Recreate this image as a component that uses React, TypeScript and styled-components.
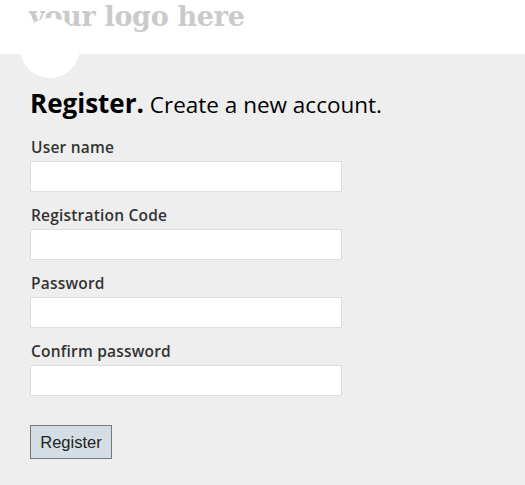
import React from 'react';
import styled, { createGlobalStyle } from 'styled-components';

const GlobalStyle = createGlobalStyle`
  html, body {
    margin: 0;
    padding: 0;
    background: #eeeeee;
  }
  body {
    font-family: "Open Sans", "Noto Sans", sans-serif;
  }
`;

const Header = styled.header`
  position: relative;
  height: 54px;
  background: #ffffff;
  padding-left: 29px;
`;

const Logo = styled.div`
  font-family: "DejaVu Serif", "Liberation Serif", serif;
  font-weight: bold;
  font-size: 27px;
  line-height: 34px;
  letter-spacing: -0.3px;
  color: #cacaca;
`;

const LogoBadge = styled.div`
  position: absolute;
  left: 20px;
  top: 18px;
  width: 60px;
  height: 60px;
  border-radius: 50%;
  background: #ffffff;
`;

const Main = styled.main`
  background: #eeeeee;
  padding: 33px 30px 24px 30px;
`;

const Title = styled.h1`
  margin: 0 0 15px 0;
  font-size: 22.5px;
  font-weight: normal;
  line-height: 32px;
  color: #000000;
`;

const Strong = styled.strong`
  font-size: 26px;
  font-weight: 700;
`;

const Field = styled.div`
  display: flex;
  flex-direction: column;
  margin-bottom: 12px;
`;

const Label = styled.label`
  font-size: 15.5px;
  font-weight: 600;
  letter-spacing: 0.2px;
  line-height: 22px;
  color: #333333;
  margin: 0 0 3px 1px;
`;

const Input = styled.input`
  box-sizing: border-box;
  width: 312px;
  height: 31px;
  border: 1px solid #dddddd;
  background: #ffffff;
  outline: none;
  padding: 4px 6px;
`;

const Button = styled.button`
  margin-top: 17px;
  box-sizing: border-box;
  width: 82px;
  height: 34px;
  background: #d4dde3;
  border: 1px solid #777777;
  color: #222222;
  font-family: "Liberation Sans", Arial, sans-serif;
  font-size: 16.5px;
  padding: 0;
`;

const fields = ['User name', 'Registration Code', 'Password', 'Confirm password'];

export default function App() {
  return (
    <>
      <GlobalStyle />
      <Header>
        <LogoBadge />
        <Logo>your logo here</Logo>
      </Header>
      <Main>
        <Title>
          <Strong>Register.</Strong> Create a new account.
        </Title>
        {fields.map((f) => (
          <Field key={f}>
            <Label>{f}</Label>
            <Input type={f.toLowerCase().includes('password') ? 'password' : 'text'} />
          </Field>
        ))}
        <Button>Register</Button>
      </Main>
    </>
  );
}
